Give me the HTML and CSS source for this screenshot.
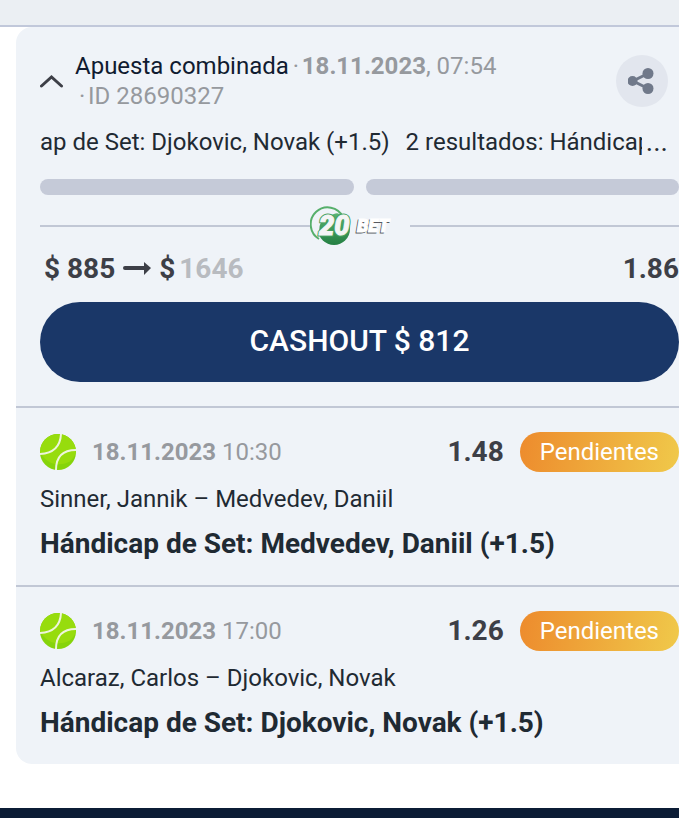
FILE: index.html
```html
<!DOCTYPE html>
<html lang="es">
<head>
	<meta charset="UTF-8">
	<meta name="viewport" content="width=device-width, initial-scale=1">
	<title>Apuesta combinada</title>
	<link rel="stylesheet" href="styles.css">
</head>
<body>
	<header class="topbar"></header>
	<main class="card">
		<section class="summary">
			<div class="head">
				<button class="toggle" type="button" aria-label="Ocultar">
					<svg width="24" height="14" viewBox="0 0 24 14"><path d="M1.500 12L11.500 3L21.500 12" fill="none" stroke="#3d3f47" stroke-width="3" stroke-linecap="round"/></svg>
				</button>
				<div class="title">
					<p><span class="name">Apuesta combinada</span><span class="dot">·</span><b>18.11.2023</b>, 07:54</p>
					<p><span class="dot">·</span>ID 28690327</p>
				</div>
				<button class="share" type="button" aria-label="Compartir">
					<svg width="28" height="28" viewBox="0 0 28 28" fill="#70798a"><path d="M20 6.500L5 14L20 21.500" fill="none" stroke="#70798a" stroke-width="3"/><circle cx="4.500" cy="14" r="5"/><circle cx="20" cy="6.500" r="5.500"/><circle cx="20" cy="21.500" r="5.500"/></svg>
				</button>
			</div>
			<div class="ticker">
				<div class="track"><span>ap de Set: Djokovic, Novak (+1.5)</span><span>2 resultados: Hándicap</span></div>
				<span class="more">...</span>
			</div>
			<div class="bars"><i></i><i></i></div>
			<div class="divider">
				<svg class="logo" width="100" height="40" viewBox="0 0 100 40" role="img" aria-label="20Bet">
					<defs>
						<linearGradient id="green" x1="0" y1="0" x2="0" y2="1"><stop offset="0" stop-color="#5ab471"/><stop offset="1" stop-color="#247f43"/></linearGradient>
					</defs>
					<circle cx="24" cy="23" r="16" fill="url(#green)"/>
					<path d="M5 31A16 16 0 0 1 31 6Q19 8 11 16Q8 22 10 32Z" fill="#eff3f8"/>
					<path d="M9 33A17 17 0 1 1 33 11" fill="none" stroke="#56af6b" stroke-width="2"/>
					<text class="num num-back" x="9" y="29">20</text>
					<text class="num" x="9" y="29">20</text>
					<text class="bet shade" x="46" y="27">BET</text>
					<text class="bet" x="47" y="26">BET</text>
				</svg>
			</div>
			<div class="amounts">
				<span>$ 885</span>
				<svg width="28" height="16" viewBox="0 0 28 16"><path d="M2 7H22" stroke="#3d3f47" stroke-width="4" stroke-linecap="round"/><path d="M21 1L28 7L21 14Z" fill="#3d3f47"/></svg>
				<span class="payout">$<span class="win">1646</span></span>
				<span class="total">1.86</span>
			</div>
			<button class="cashout" type="button">CASHOUT $ 812</button>
		</section>
		<section class="bet-item">
			<div class="row">
				<svg class="ball" width="36" height="36" viewBox="0 0 36 36"><circle cx="18" cy="18" r="18" fill="#86d40b"/><path d="M0 18A18 18 0 0 1 36 18Q32 32 15 30Q5 28 0 18Z" fill="#97dc0d"/><path d="M21 0Q20 19 0 20M36 16Q16 16 16 36" fill="none" stroke="#eef5dc" stroke-width="2"/></svg>
				<time><b>18.11.2023</b> 10:30</time>
				<span class="odd">1.48</span>
				<span class="badge">Pendientes</span>
			</div>
			<p class="teams">Sinner, Jannik – Medvedev, Daniil</p>
			<h2>Hándicap de Set: Medvedev, Daniil (+1.5)</h2>
		</section>
		<section class="bet-item">
			<div class="row">
				<svg class="ball" width="36" height="36" viewBox="0 0 36 36"><circle cx="18" cy="18" r="18" fill="#86d40b"/><path d="M0 18A18 18 0 0 1 36 18Q32 32 15 30Q5 28 0 18Z" fill="#97dc0d"/><path d="M21 0Q20 19 0 20M36 16Q16 16 16 36" fill="none" stroke="#eef5dc" stroke-width="2"/></svg>
				<time><b>18.11.2023</b> 17:00</time>
				<span class="odd">1.26</span>
				<span class="badge">Pendientes</span>
			</div>
			<p class="teams">Alcaraz, Carlos – Djokovic, Novak</p>
			<h2>Hándicap de Set: Djokovic, Novak (+1.5)</h2>
		</section>
	</main>
	<footer class="footer"></footer>
</body>
</html>
```

FILE: styles.css
```css
* { margin: 0; padding: 0; box-sizing: border-box; }
body { background: #fff; color: #1f2a33; font: 24px/30px Roboto, sans-serif; }
button { border: 0; background: none; font-family: inherit; cursor: pointer; }
svg { display: block; flex: none; }

.topbar { height: 27px; background: #ebeff3; border-bottom: 2px solid #c1c8da; }
.card { margin-left: 16px; background: #eff3f8; border-radius: 16px 0 0 16px; }
.summary { padding: 24px 0 24px 24px; }

/* header */
.head { display: flex; align-items: center; padding-right: 11px; color: #96999e; }
.toggle { width: 35px; }
.title { flex: 1; }
.name { color: #101b30; }
.dot { display: inline-block; width: 13px; padding-left: 4px; }
.share { width: 52px; height: 52px; border-radius: 50%; background: #e2e6ee; display: flex; align-items: center; justify-content: center; }

.ticker { display: flex; gap: 4px; padding-right: 11px; margin-top: 16px; }
.track { flex: 1; min-width: 0; display: flex; gap: 16px; overflow: hidden; white-space: nowrap; }
.more { font-size: 28px; }
.bars { display: flex; gap: 12px; margin-top: 22px; }
.bars i { flex: 1; height: 16px; border-radius: 8px; background: #c5cad8; }

.divider { display: flex; align-items: center; margin-top: 11px; }
.divider:before, .divider:after { content: ""; flex: 1; height: 2px; background: #c1c7d5; }
.num { font: italic 900 27px Roboto, sans-serif; fill: #f4f5f5; stroke: #f4f5f5; stroke-width: 1px; }
.num-back { stroke: #46a060; stroke-width: 3px; }
.bet { font: italic 900 18px Roboto, sans-serif; fill: #fff; stroke: #fff; stroke-width: 1px; }
.shade { fill: #55595f; stroke: #55595f; }

.amounts { display: flex; align-items: center; gap: 8px; padding: 5px 0 0 4px; font-size: 28px; line-height: 36px; font-weight: 700; color: #3d3f47; }
.payout { display: flex; gap: 4px; }
.win { color: #b8bbc0; }
.total { margin-left: auto; }
.cashout { display: block; width: 100%; height: 80px; margin-top: 15px; padding-bottom: 4px; border-radius: 40px; background: #1a3768; color: #fff; font-size: 30px; font-weight: 500; }

/* bets */
.bet-item { padding: 24px 0 24px 24px; border-top: 2px solid #c1c7d5; }
.row { display: flex; align-items: center; color: #96999e; }
.row time { margin-left: 16px; }
.odd { margin-left: auto; font-size: 28px; font-weight: 700; color: #3d3f47; }
.badge { margin-left: 16px; padding: 0 20px; border-radius: 20px; line-height: 40px; color: #fff; background: linear-gradient(100deg, #ed8b2d, #f0c94a); }
.teams { margin-top: 12px; }
.bet-item h2 { margin-top: 12px; font-size: 28px; line-height: 35px; font-weight: 700; }

.footer { height: 10px; margin-top: 44px; background: #0b1c35; }
```
